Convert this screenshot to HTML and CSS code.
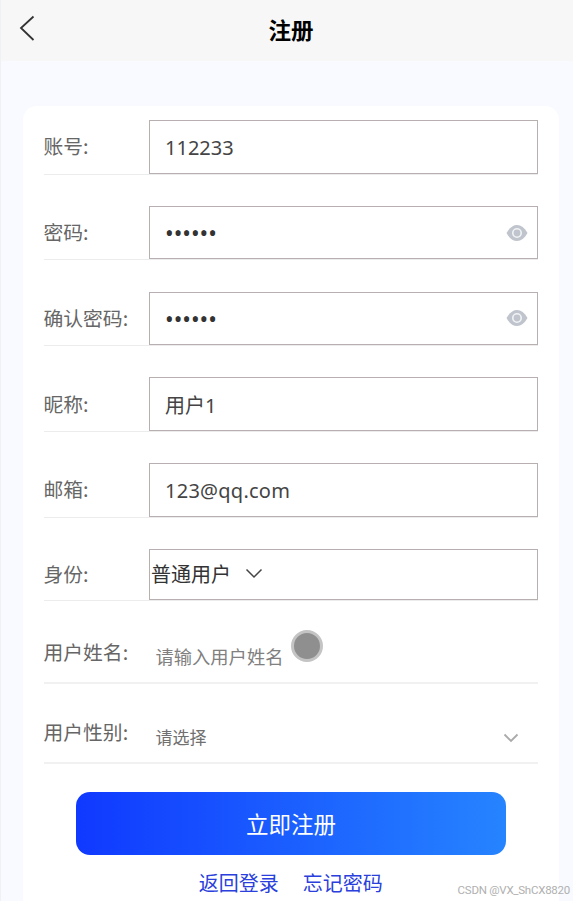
FILE: index.html
```html
<!DOCTYPE html>
<html lang="zh-CN">
<head>
  <meta charset="UTF-8" />
  <meta name="viewport" content="width=device-width, initial-scale=1" />
  <title>注册</title>
  <link rel="stylesheet" href="styles.css">
</head>
<body>
  <header class="navbar">
    <a class="back" href="#">
      <svg width="16" height="26" viewBox="0 0 16 26"><path d="M14.500 1.500L2 13l12.500 12" fill="none" stroke="#333" stroke-width="1.800" /></svg>
    </a>
    <h1>注册</h1>
  </header>

  <form class="card">
    <div class="row">
      <label for="account">账号:</label>
      <div class="field"><input type="text" id="account" value="112233" /></div>
    </div>

    <div class="row">
      <label for="password">密码:</label>
      <div class="field">
        <input type="password" id="password" value="123456" />
        <svg class="eye" width="22" height="18" viewBox="0 0 22 18"><path d="M0.500 9C3.400 3.800 7 1 11 1s7.600 2.800 10.500 8C18.600 14.200 15 17 11 17S3.400 14.200 0.500 9z" fill="#c0c4cc" /><circle cx="11" cy="9" r="4.200" fill="#c0c4cc" stroke="#f1f3f6" stroke-width="1.600" /></svg>
      </div>
    </div>

    <div class="row">
      <label for="password2">确认密码:</label>
      <div class="field">
        <input type="password" id="password2" value="123456" />
        <svg class="eye" width="22" height="18" viewBox="0 0 22 18"><path d="M0.500 9C3.400 3.800 7 1 11 1s7.600 2.800 10.500 8C18.600 14.200 15 17 11 17S3.400 14.200 0.500 9z" fill="#c0c4cc" /><circle cx="11" cy="9" r="4.200" fill="#c0c4cc" stroke="#f1f3f6" stroke-width="1.600" /></svg>
      </div>
    </div>

    <div class="row">
      <label for="nickname">昵称:</label>
      <div class="field"><input type="text" id="nickname" value="用户1" /></div>
    </div>

    <div class="row">
      <label for="email">邮箱:</label>
      <div class="field"><input type="email" id="email" value="123@qq.com" /></div>
    </div>

    <div class="row role">
      <label>身份:</label>
      <div class="field picker">
        <span>普通用户</span>
        <svg width="18" height="11" viewBox="0 0 18 11"><path d="M1.500 1.500L9 9l7.500-7.500" fill="none" stroke="#444" stroke-width="1.500" /></svg>
      </div>
    </div>

    <div class="row plain name">
      <label for="realname">用户姓名:</label>
      <input type="text" id="realname" placeholder="请输入用户姓名" />
      <span class="touch"></span>
    </div>

    <div class="row plain gender">
      <label>用户性别:</label>
      <div class="select">
        <span>请选择</span>
        <svg width="16" height="10" viewBox="0 0 16 10"><path d="M1.500 1.500L8 8l6.500-6.500" fill="none" stroke="#aaa" stroke-width="1.800" /></svg>
      </div>
    </div>

    <button type="button" class="submit">立即注册</button>

    <div class="links">
      <a href="#">返回登录</a>
      <a href="#">忘记密码</a>
    </div>
  </form>

  <div class="watermark">CSDN @VX_ShCX8820</div>
</body>
</html>
```

FILE: styles.css
```css
* {
  box-sizing: border-box;
}

body {
  margin: 0;
  height: 901px;
  overflow: hidden;
  background: #f8faff;
  border-left: 1px solid #f0f1f4;
  font-family: "Noto Sans", "Noto Sans CJK SC", sans-serif;
  font-size: 20px;
  color: #333;
}

.navbar {
  display: flex;
  align-items: center;
  height: 61px;
  padding: 0 18px;
  background: #f7f7f7;
}

.back {
  display: flex;
  width: 16px;
  margin-bottom: 5px;
}

h1 {
  flex: 1;
  margin: 0 8px 0 0;
  font-size: 22.5px;
  font-weight: 700;
  line-height: 30px;
  text-align: center;
  color: #000;
}

.card {
  height: 820px;
  margin: 45px 14px 0 21.5px;
  padding: 14px 21px 0;
  border-radius: 14px;
  background: #fff;
}

.row {
  display: flex;
  align-items: center;
  height: 54.5px;
  margin-bottom: 31.25px;
  border-bottom: 1px solid #ececec;
}

label {
  width: 105.5px;
  flex: none;
  padding-bottom: 1px;
  font-family: "Noto Sans CJK SC", sans-serif;
  font-size: 19.8px;
  line-height: 30px;
  color: #666;
}

.field {
  flex: 1;
  display: flex;
  align-items: center;
  height: 53.5px;
  padding: 0 9px 0 15px;
  border: 1px solid #b8b0b0;
}

input {
  flex: 1;
  min-width: 0;
  padding: 1px 0 0;
  border: none;
  outline: none;
  background: none;
  font: inherit;
  color: #444;
}

input[type="password"] {
  font-size: 23px;
  color: #333;
}

input[type="email"] {
  letter-spacing: 0.25px;
}

.eye {
  flex: none;
}

.role {
  height: 52px;
  margin-bottom: 25px;
}

.role label {
  padding-bottom: 0;
}

.role .field {
  height: 51px;
}

.picker {
  gap: 14px;
  padding: 0 0 2px 1px;
}

.plain {
  height: 58px;
  margin-bottom: 22px;
  border-bottom: 2px solid #f1f1f1;
}

.plain label {
  width: 112px;
  padding-bottom: 3px;
}

.name input {
  flex: none;
  width: 128px;
  margin-top: 4px;
  font-size: 18.3px;
}

.name input::placeholder {
  color: #808080;
  opacity: 1;
}

.touch {
  width: 32px;
  height: 32px;
  margin: -15px 0 0 7px;
  border: 3px solid #c4c4c4;
  border-radius: 50%;
  background: #8f8f8f;
}

.select {
  flex: 1;
  display: flex;
  align-items: center;
  justify-content: space-between;
  margin-top: 8px;
  padding-right: 19px;
  font-size: 17px;
  line-height: 26px;
  color: #707070;
}

.submit {
  display: block;
  width: 430px;
  height: 63px;
  margin: 28px 0 0 32.5px;
  border: none;
  border-radius: 14px;
  background: linear-gradient(90deg, #1039ff, #2684ff);
  font-family: inherit;
  font-size: 22.5px;
  color: #fff;
}

.links {
  display: flex;
  justify-content: center;
  gap: 24px;
  margin-top: 14px;
  line-height: 30px;
}

.links a {
  color: #2a3fdc;
  text-decoration: none;
}

/* sits over the card, bottom right of the screen */
.watermark {
  position: absolute;
  right: 3px;
  bottom: 3px;
  font-family: Roboto, sans-serif;
  font-size: 11.5px;
  line-height: 16px;
  letter-spacing: -0.25px;
  color: #b0b0b0;
}
```
